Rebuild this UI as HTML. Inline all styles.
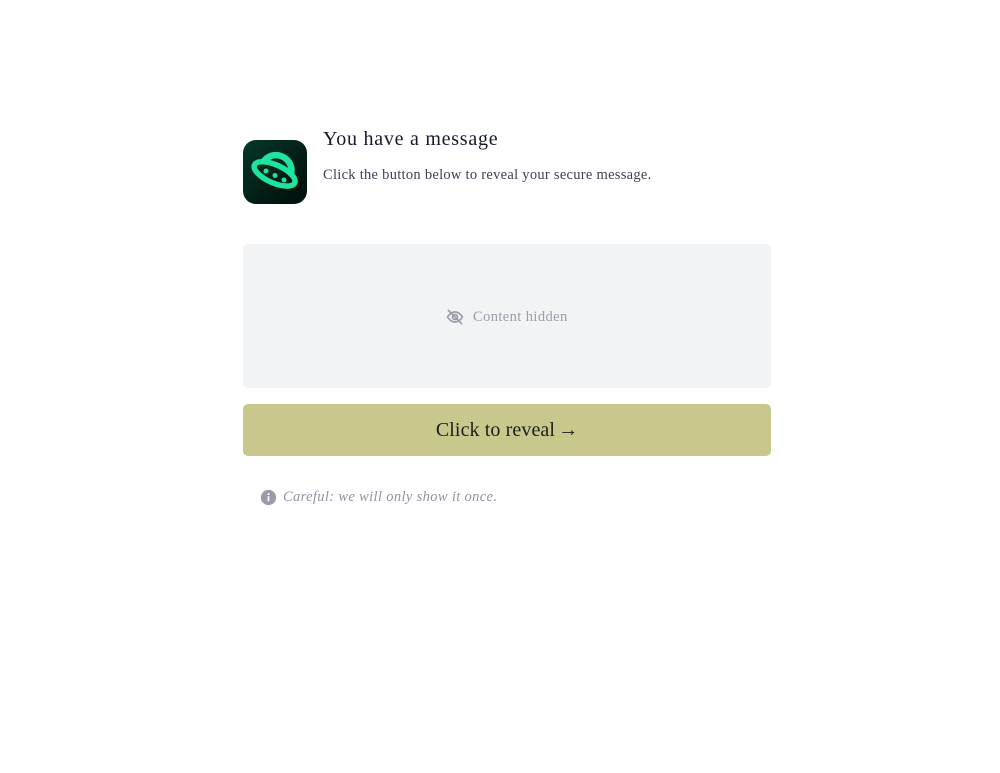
<!DOCTYPE html>
<html><head><meta charset="utf-8"><style>
body{margin:0;width:1000px;height:773px;background:#fff;font-family:"Liberation Serif",serif;position:relative;overflow:hidden}
.logo{position:absolute;left:243px;top:140px;width:64px;height:64px;border-radius:13px;background:linear-gradient(135deg,#06372a,#02140f 80%)}
h1{position:absolute;left:323px;top:128px;margin:0;font-weight:normal;font-size:20px;letter-spacing:0.75px;color:#151a2e}
.sub{position:absolute;left:323px;top:167px;font-size:14.5px;letter-spacing:0.28px;color:#3b4256}
.box{position:absolute;left:243px;top:244px;width:528px;height:144px;background:#f2f3f5;border-radius:5px}
.hid{position:absolute;left:445px;top:307px;color:#9a9cab;font-size:14.5px;letter-spacing:0.4px;display:flex;align-items:center}
.btn{position:absolute;left:243px;top:404px;width:528px;height:52px;background:#c8c88c;border-radius:5px;text-align:center;line-height:52px;font-size:20px;color:#1c1c1c;letter-spacing:0.1px}
.note{position:absolute;left:260px;top:489px;font-style:italic;color:#8f93a3;font-size:14.5px;letter-spacing:0.35px;display:flex;align-items:center}
</style></head><body>
<div class="logo"><svg width="64" height="64" viewBox="0 0 64 64">
<g transform="rotate(24 32 33)" fill="none" stroke="#1fe3a0" stroke-width="5.5">
<ellipse cx="32" cy="34" rx="22" ry="9"/>
<path d="M17 29 A15 14 0 0 1 47 29" stroke-width="6.5"/>
</g>
<circle cx="23" cy="31" r="2.5" fill="#1fe3a0"/><circle cx="32" cy="35.5" r="2.5" fill="#1fe3a0"/><circle cx="41" cy="40" r="2.5" fill="#1fe3a0"/>
</svg></div>
<h1>You have a message</h1>
<div class="sub">Click the button below to reveal your secure message.</div>
<div class="box"></div>
<div class="hid"><svg width="20" height="20" viewBox="0 0 24 24" fill="none" stroke="#9a9cab" stroke-width="2" stroke-linecap="round"><path d="M3 12s3.5-6 9-6 9 6 9 6-3.5 6-9 6-9-6-9-6z"/><circle cx="12" cy="12" r="3"/><path d="M4 4l16 16"/></svg><span style="margin-left:8px">Content hidden</span></div>
<div class="btn">Click to reveal<span style="margin-left:3px">→</span></div>
<div class="note"><svg width="17" height="17" viewBox="0 0 20 20"><circle cx="10" cy="10" r="9" fill="#9a9cab"/><rect x="9" y="8.5" width="2" height="6" fill="#fff"/><circle cx="10" cy="6" r="1.2" fill="#fff"/></svg><span style="margin-left:6px">Careful: we will only show it once.</span></div>
</body></html>
